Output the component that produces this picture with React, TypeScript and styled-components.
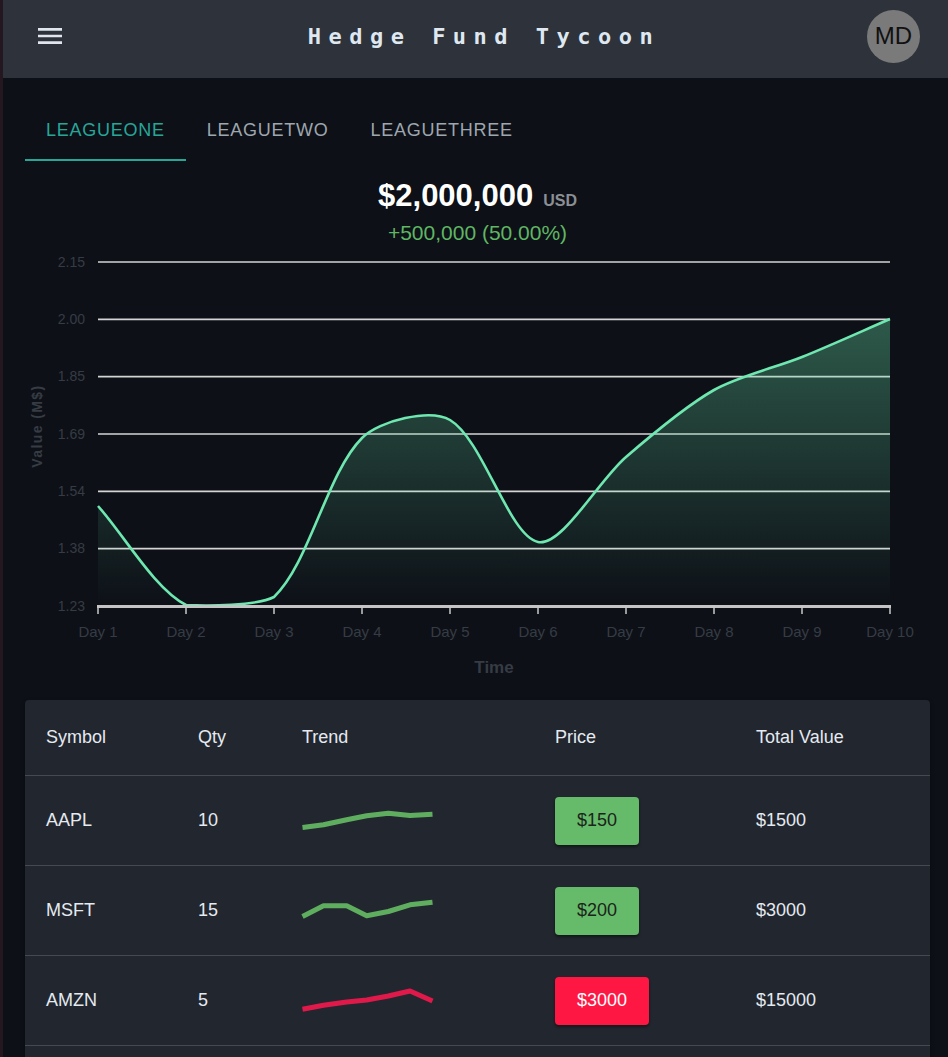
import React from "react";
import styled, { createGlobalStyle } from "styled-components";

const GlobalStyle = createGlobalStyle`
  html, body { margin: 0; padding: 0; }
  body {
    background: #25171f;
    font-family: "Liberation Sans", Arial, sans-serif;
  }
`;

const Shell = styled.div`
  margin-left: 3px;
  min-height: 1057px;
  background: #0d1017;
`;

const Header = styled.header`
  height: 78px;
  box-sizing: border-box;
  padding: 0 28px 6px 31px;
  background: #2e323a;
  display: grid;
  grid-template-columns: 1fr auto 1fr;
  align-items: center;
`;

const MenuButton = styled.div`
  justify-self: start;
  width: 32px;
  height: 32px;
  color: #dfe6ee;
  display: flex;
`;

const Title = styled.h1`
  margin: 0;
  padding-left: 14px;
  font-family: "DejaVu Sans Mono", "Liberation Mono", monospace;
  font-weight: bold;
  font-size: 22px;
  letter-spacing: 7.5px;
  color: #dfe8f0;
  white-space: nowrap;
`;

const Avatar = styled.div`
  justify-self: end;
  width: 53px;
  height: 53px;
  border-radius: 50%;
  background: #7a7a7a;
  color: #111;
  font-size: 24px;
  display: flex;
  align-items: center;
  justify-content: center;
`;

const Main = styled.main`
  padding: 19px 18px 0 22px;
`;

const Tabs = styled.nav`
  display: flex;
`;

const Tab = styled.div<{ $active?: boolean }>`
  height: 64px;
  box-sizing: border-box;
  padding: 4px 21px 0;
  display: flex;
  align-items: center;
  font-size: 18px;
  letter-spacing: 0.75px;
  text-transform: uppercase;
  color: ${(p) => (p.$active ? "#27a697" : "#9ea6ae")};
  border-bottom: 2px solid ${(p) => (p.$active ? "#27a697" : "transparent")};
`;

const ValueRow = styled.div`
  margin-top: 19px;
  display: flex;
  justify-content: center;
  align-items: baseline;
  gap: 10px;
  line-height: 31px;
`;

const BigValue = styled.span`
  font-size: 31px;
  font-weight: bold;
  color: #ffffff;
`;

const Currency = styled.span`
  font-size: 16px;
  font-weight: bold;
  color: #8b8f95;
`;

const Change = styled.div`
  margin-top: 5px;
  text-align: center;
  font-size: 21px;
  line-height: 24px;
  color: #5fb663;
`;

const ChartSvg = styled.svg`
  display: block;
  width: 905px;
  height: 445px;
  font-family: "Liberation Sans", Arial, sans-serif;
`;

const Card = styled.section`
  margin-top: 10px;
  background: #22262e;
  border-radius: 4px;
  box-shadow: 0 2px 4px rgba(0, 0, 0, 0.4);
  padding-bottom: 20px;
`;

const Row = styled.div<{ $head?: boolean }>`
  display: grid;
  grid-template-columns: 152px 104px 253px 201px 1fr;
  align-items: center;
  padding: 0 21px;
  height: ${(p) => (p.$head ? "75px" : "89px")};
  border-bottom: 1px solid #46494f;
  font-size: 18px;
  color: #e4eaf0;
`;

const Cell = styled.div`
  display: flex;
  align-items: center;
`;

const PriceButton = styled.div<{ $up: boolean }>`
  height: 48px;
  padding: 0 22px;
  border-radius: 4px;
  display: flex;
  align-items: center;
  font-size: 18px;
  background: ${(p) => (p.$up ? "#66bb6a" : "#ff1744")};
  color: ${(p) => (p.$up ? "#1c231c" : "#ffffff")};
  box-shadow: 0 2px 3px rgba(0, 0, 0, 0.45);
`;

/* ---------- chart ---------- */

const LEFT = 73;
const RIGHT = 865;
const TOP = 17;
const BOTTOM = 361;
const pts: [number, number][] = [
  [73, 261],
  [161, 360],
  [249, 352],
  [337, 193],
  [425, 175],
  [513, 297],
  [601, 212],
  [689, 145],
  [777, 112],
  [865, 74],
];

function clamp(v: number, lo: number, hi: number) {
  return Math.max(lo, Math.min(hi, v));
}

function splinePath(points: [number, number][], t: number) {
  const cps = points.map((cur, i) => {
    const prev = points[i - 1] || cur;
    const next = points[i + 1] || cur;
    const d01 = Math.hypot(cur[0] - prev[0], cur[1] - prev[1]);
    const d12 = Math.hypot(next[0] - cur[0], next[1] - cur[1]);
    let s01 = d01 / (d01 + d12);
    let s12 = d12 / (d01 + d12);
    if (isNaN(s01)) s01 = 0;
    if (isNaN(s12)) s12 = 0;
    const fa = t * s01;
    const fb = t * s12;
    const before: [number, number] = [
      clamp(cur[0] - fa * (next[0] - prev[0]), LEFT, RIGHT),
      clamp(cur[1] - fa * (next[1] - prev[1]), TOP, BOTTOM),
    ];
    const after: [number, number] = [
      clamp(cur[0] + fb * (next[0] - prev[0]), LEFT, RIGHT),
      clamp(cur[1] + fb * (next[1] - prev[1]), TOP, BOTTOM),
    ];
    return { before, after };
  });
  let d = `M${points[0][0]},${points[0][1]}`;
  for (let i = 1; i < points.length; i++) {
    const a = cps[i - 1].after;
    const b = cps[i].before;
    d += ` C${a[0].toFixed(2)},${a[1].toFixed(2)} ${b[0].toFixed(2)},${b[1].toFixed(2)} ${points[i][0]},${points[i][1]}`;
  }
  return d;
}

const yLabels = ["2.15", "2.00", "1.85", "1.69", "1.54", "1.38", "1.23"];

function ValueChart() {
  const line = splinePath(pts, 0.3);
  const area = `${line} L${RIGHT},${BOTTOM} L${LEFT},${BOTTOM} Z`;
  const step = (BOTTOM - TOP) / 6;
  return (
    <ChartSvg viewBox="0 0 905 445">
      <defs>
        <linearGradient id="fillGrad" gradientUnits="userSpaceOnUse" x1="0" y1={TOP} x2="0" y2={BOTTOM}>
          <stop offset="0" stopColor="#69e2a8" stopOpacity="0.42" />
          <stop offset="1" stopColor="#69e2a8" stopOpacity="0" />
        </linearGradient>
      </defs>
      {yLabels.map((l, i) => {
        const y = TOP + i * step;
        return (
          <g key={l}>
            {i < 6 && <line x1={LEFT} x2={RIGHT} y1={y} y2={y} stroke="#d4d4d4" strokeWidth="1.6" />}
            <text x={60} y={y + 1} textAnchor="end" dominantBaseline="middle" fontSize="14" fill="#363c44">
              {l}
            </text>
          </g>
        );
      })}
      <path d={area} fill="url(#fillGrad)" />
      <path d={line} fill="none" stroke="#6ee7b0" strokeWidth="2.6" strokeLinejoin="round" />
      <line x1={LEFT - 1} x2={RIGHT + 1} y1={BOTTOM + 0.5} y2={BOTTOM + 0.5} stroke="#c4c4c4" strokeWidth="3" />
      {pts.map((p, i) => (
        <g key={i}>
          <line x1={p[0]} x2={p[0]} y1={BOTTOM} y2={BOTTOM + 8} stroke="#c8c8c8" strokeWidth="1.5" />
          <text x={p[0]} y={388} textAnchor="middle" dominantBaseline="middle" fontSize="15" fill="#363c44">
            Day {i + 1}
          </text>
        </g>
      ))}
      <text x={469} y={424} textAnchor="middle" dominantBaseline="middle" fontSize="17" fontWeight="bold" fill="#363c44">
        Time
      </text>
      <text
        transform="translate(13 181) rotate(-90)"
        textAnchor="middle"
        dominantBaseline="middle"
        fontSize="14"
        fontWeight="bold"
        letterSpacing="1.4"
        fill="#363c44"
      >
        Value (M$)
      </text>
    </ChartSvg>
  );
}

/* ---------- table ---------- */

type Holding = {
  symbol: string;
  qty: number;
  price: number;
  up: boolean;
  trend: number[];
};

const holdings: Holding[] = [
  { symbol: "AAPL", qty: 10, price: 150, up: true, trend: [21.5, 18.8, 13.8, 9.8, 7.2, 9.5, 8.2] },
  { symbol: "MSFT", qty: 15, price: 200, up: true, trend: [20.5, 9.8, 9.8, 19.8, 15.5, 8.8, 6.2] },
  { symbol: "AMZN", qty: 5, price: 3000, up: false, trend: [23.3, 19.3, 16, 14, 10, 5, 15] },
];

const SparkSvg = styled.svg`
  display: block;
  width: 131px;
  height: 30px;
  overflow: visible;
`;

function Sparkline({ data, color }: { data: number[]; color: string }) {
  const xs = [0.5, 21.5, 44.7, 64.7, 86.3, 108, 130.5];
  const points = data.map((y, i) => `${xs[i]},${y}`).join(" ");
  return (
    <SparkSvg viewBox="0 0 131 30">
      <polyline points={points} fill="none" stroke={color} strokeWidth="5" strokeLinejoin="round" />
    </SparkSvg>
  );
}

function MenuIcon() {
  return (
    <svg viewBox="0 0 24 24" width="32" height="32" fill="currentColor">
      <path d="M3 18h18v-2H3zm0-5h18v-2H3zm0-7v2h18V6z" />
    </svg>
  );
}

export default function App() {
  return (
    <>
      <GlobalStyle />
      <Shell>
        <Header>
          <MenuButton>
            <MenuIcon />
          </MenuButton>
          <Title>Hedge Fund Tycoon</Title>
          <Avatar>MD</Avatar>
        </Header>
        <Main>
          <Tabs>
            <Tab $active>LeagueOne</Tab>
            <Tab>LeagueTwo</Tab>
            <Tab>LeagueThree</Tab>
          </Tabs>
          <ValueRow>
            <BigValue>$2,000,000</BigValue>
            <Currency>USD</Currency>
          </ValueRow>
          <Change>+500,000 (50.00%)</Change>
          <ValueChart />
          <Card>
            <Row $head>
              <Cell>Symbol</Cell>
              <Cell>Qty</Cell>
              <Cell>Trend</Cell>
              <Cell>Price</Cell>
              <Cell>Total Value</Cell>
            </Row>
            {holdings.map((h) => (
              <Row key={h.symbol}>
                <Cell>{h.symbol}</Cell>
                <Cell>{h.qty}</Cell>
                <Cell>
                  <Sparkline data={h.trend} color={h.up ? "#5fae5f" : "#e0194b"} />
                </Cell>
                <Cell>
                  <PriceButton $up={h.up}>${h.price}</PriceButton>
                </Cell>
                <Cell>${h.qty * h.price}</Cell>
              </Row>
            ))}
          </Card>
        </Main>
      </Shell>
    </>
  );
}
